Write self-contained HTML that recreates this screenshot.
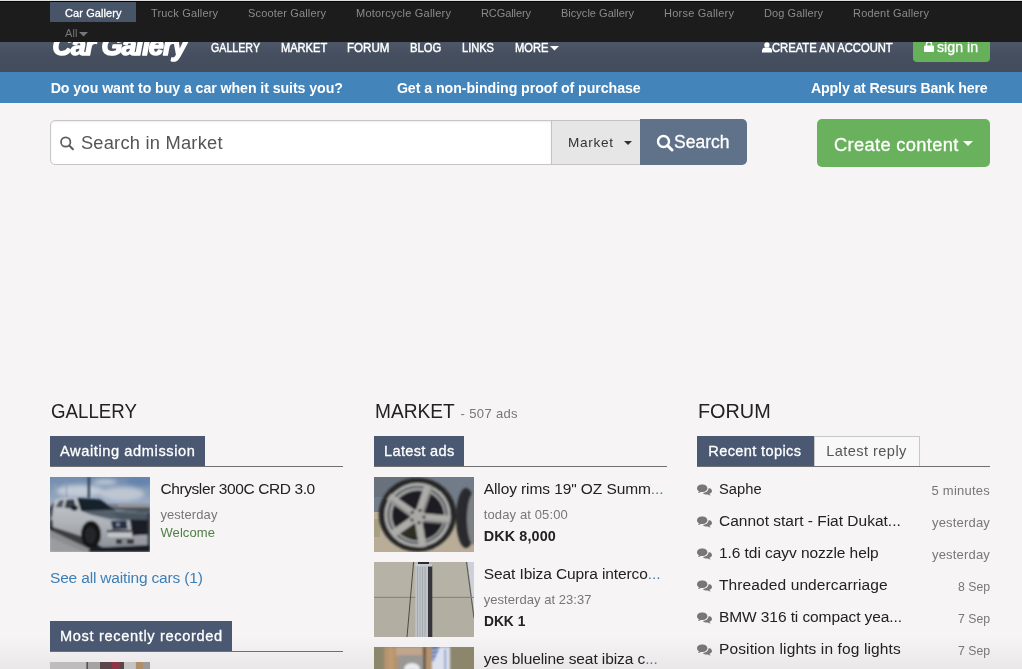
<!DOCTYPE html>
<html>
<head>
<meta charset="utf-8">
<title>Car Gallery</title>
<style>
*{box-sizing:border-box;margin:0;padding:0}
html,body{width:1022px;height:669px;overflow:hidden}
body{background:#f6f4f5;font-family:"Liberation Sans",sans-serif;color:#222;position:relative}
#wrap{position:absolute;left:0;top:0;width:1022px;height:669px;overflow:hidden;will-change:transform}
.abs{position:absolute;white-space:nowrap}
.x{line-height:1.2}
svg{display:block}
#topbar{left:0;top:0;width:1022px;height:42px;background:#1c1c1c;border-top:1px solid #dedede;box-shadow:inset 0 1px 0 #060606;z-index:5}
#gon{left:50px;top:2px;width:86px;height:20px;background:#485467;z-index:5}
#header{left:0;top:42px;width:1022px;height:30px;background:linear-gradient(#4d5767,#464f5f 40%,#444d5c)}
#signin{left:913px;top:42px;width:77px;height:20px;background:#66b05a;border-radius:0 0 4px 4px}
#bluebar{left:0;top:72px;width:1022px;height:31px;background:#4384ba}
#sinput{left:50px;top:120px;width:502px;height:45px;background:#fff;border:1px solid #c6c6c6;border-radius:5px 0 0 5px;box-shadow:inset 0 1px 2px rgba(0,0,0,.08)}
#ssel{left:551px;top:120px;width:89px;height:45px;background:#e6e6e6;border:1px solid #c3c3c3;border-right:none}
#sbtn{left:640px;top:119px;width:107px;height:46px;background:#5f7289;border-radius:0 5px 5px 0}
#create{left:817px;top:119px;width:173px;height:48px;background:#6ab15d;border-radius:5px}
.tab{top:436px;height:30px;background:#4a5971}
.tab.off{background:#f8f8f8;border:1px solid #c8c8c8;border-bottom:none}
.rule{height:1px;background:#707070;width:293px}
.thumb{width:100px;height:75px;overflow:hidden;background:#999}
.el{color:#3d7fb6}
</style>
</head>
<body>
<div id="wrap">
<div class="abs" style="left:0;top:636px;width:1022px;height:33px;background:linear-gradient(rgba(0,0,0,0),rgba(0,0,0,.05))"></div>
<div id="topbar" class="abs"></div>
<div id="gon" class="abs"></div>
<div id="header" class="abs"></div>
<svg class="abs" style="left:40px;top:42px" width="170" height="24" viewBox="40 42 170 24"><text x="52.500" y="55" font-family="Liberation Sans, sans-serif" font-size="27" font-weight="bold" font-style="italic" fill="#fff" stroke="#fff" stroke-width="1.500" stroke-linejoin="round" textLength="135" lengthAdjust="spacing">Car Gallery</text></svg>
<svg class="abs" style="left:79px;top:32px;z-index:6" width="9" height="5" viewBox="0 0 9 5"><path d="M0 0h9L4.500 4.500z" fill="#777"/></svg>
<svg class="abs" style="left:550px;top:46px" width="9" height="5" viewBox="0 0 9 5"><path d="M0 0h9L4.500 4.500z" fill="#fff"/></svg>
<svg class="abs" style="left:762px;top:42px" width="10" height="11" viewBox="0 0 10 11"><circle cx="4.900" cy="2.900" r="2.650" fill="#fff"/><path d="M0 10.400V8.300C0 6.400 1.800 5.500 3 5.500h4c1.200 0 3 .9 3 2.800V10.400z" fill="#fff"/></svg>
<div id="signin" class="abs"></div>
<svg class="abs" style="left:924px;top:41px" width="10" height="11" viewBox="0 0 10 11"><rect x="0" y="4.500" width="10" height="6.500" rx="1" fill="#fff"/><path d="M2.500 5V3.200a2.500 2.500 0 0 1 5 0V5" stroke="#fff" stroke-width="1.500" fill="none"/></svg>
<div id="bluebar" class="abs"></div>
<div id="sinput" class="abs"></div>
<svg class="abs" style="left:59px;top:135px" width="16" height="16" viewBox="59 135 16 16"><circle cx="65.700" cy="142" r="4.700" stroke="#5c5c5c" stroke-width="1.700" fill="none"/><path d="M69.200 145.500L72.900 149.200" stroke="#5c5c5c" stroke-width="2" stroke-linecap="round"/></svg>
<div id="ssel" class="abs"></div>
<svg class="abs" style="left:624px;top:141px" width="8" height="4" viewBox="0 0 8 4"><path d="M0 0h8L4 4z" fill="#333"/></svg>
<div id="sbtn" class="abs"></div>
<svg class="abs" style="left:656px;top:134px" width="18" height="18" viewBox="0 0 18 18"><circle cx="7.500" cy="7.500" r="5.500" stroke="#fff" stroke-width="2.400" fill="none"/><path d="M11.500 11.500L16 16" stroke="#fff" stroke-width="3" stroke-linecap="round"/></svg>
<div id="create" class="abs"></div>
<svg class="abs" style="left:963px;top:141px" width="10" height="5" viewBox="0 0 10 5"><path d="M0 0h10L5 5z" fill="#fff"/></svg>

<div class="abs tab" style="left:50px;width:155px"></div>
<div class="abs rule" style="left:50px;top:466px"></div>
<div class="abs thumb" id="th1" style="left:50px;top:477px"><svg width="100" height="75" viewBox="0 0 100 75"><defs><linearGradient id="sky" x1="0" y1="0" x2="0" y2="1"><stop offset="0" stop-color="#6f8bae"/><stop offset=".3" stop-color="#97a8c0"/><stop offset="1" stop-color="#b6bfcb"/></linearGradient><linearGradient id="bod" x1="0" y1="0" x2="0" y2="1"><stop offset="0" stop-color="#c2c5c9"/><stop offset=".5" stop-color="#b0b4b9"/><stop offset="1" stop-color="#8d9298"/></linearGradient><filter id="b1" x="-5%" y="-5%" width="110%" height="110%"><feGaussianBlur stdDeviation="0.8"/></filter><filter id="b2" x="-20%" y="-20%" width="140%" height="140%"><feGaussianBlur stdDeviation="2.200"/></filter></defs><rect width="100" height="75" fill="url(#sky)"/><g filter="url(#b2)"><ellipse cx="30" cy="14" rx="24" ry="6" fill="#c2cad6"/><ellipse cx="72" cy="17" rx="22" ry="7" fill="#bec6d2"/><ellipse cx="90" cy="4" rx="14" ry="5" fill="#6484ad"/><ellipse cx="15" cy="3" rx="16" ry="4" fill="#7690b2"/><ellipse cx="55" cy="5" rx="12" ry="3" fill="#bcc5d2"/></g><g filter="url(#b1)"><rect x="37.800" y="0" width="2.200" height="21" fill="#2c3a50"/><rect x="16" y="4" width="1" height="17" fill="#8a98ac"/><rect x="5" y="6" width=".8" height="16" fill="#94a0b4"/><path d="M50 27h50v10H50z" fill="#767d88"/><path d="M68 27.500h32v2.500H68z" fill="#9a9898"/><path d="M60 30.500h40v5H60z" fill="#4a525e"/><path d="M0 46L30 58 54 75H0z" fill="#8b8d91"/><path d="M0 60L34 75H0z" fill="#9a9c9e"/><path d="M0 49L30 59 44 70 40 72 0 53z" fill="#3a3c40"/><path d="M44 66L100 60V75H38z" fill="#1b1f25"/><path d="M0 28L6 22.500 12 20.800 27 20.500 31 33 58 32 100 36V68L58 70 52 70 30 58 0 49z" fill="url(#bod)"/><path d="M0 30L4 24.500 2 40 0 42z" fill="#2a2e36"/><path d="M5.500 30L9.500 23.500 14 22.800 12.200 30.500z" fill="#4a5462"/><path d="M14.500 30.800L16.500 22.800 24 22.300 26.500 32.500z" fill="#353d4a"/><ellipse cx="24.500" cy="31" rx="3.400" ry="2.800" fill="#1a1e26"/><path d="M27 21L50 22.500 63 31.500 66 33.500 31 34z" fill="#18202a"/><path d="M31 34L66 33.500 100 35.500V44.500L62 42.500 42 38z" fill="#55616d"/><path d="M60 36L100 38V43L70 41.500z" fill="#48545f"/><path d="M42 38L62 42.500 100 44.500V46L60 45z" fill="#a2aab2"/><path d="M0 40L2.500 44 3 54 0 52z" fill="#16181c"/><ellipse cx="41" cy="57.500" rx="10" ry="13.800" fill="#131519"/><ellipse cx="40.500" cy="58" rx="5.500" ry="8.500" fill="#22252b"/><path d="M61 44L76.500 43.500 77.500 52 62.500 52.500z" fill="#262e42"/><circle cx="68" cy="47.500" r="2" fill="#7e889c"/><path d="M80 42.500L100 43V57.500L82 58.500z" fill="#1b1f27"/><path d="M57 53H80.500V55.400H57z" fill="#22262c"/><path d="M58 55.400H82V60H58z" fill="#c2c4c7"/><path d="M66 62h18v5H66z" fill="#34383e"/><path d="M72 62.500h5v4h-5z" fill="#90949a"/><path d="M97.500 36h2.500v32h-2.500z" fill="#33373f"/></g></svg></div>
<div class="abs tab" style="left:50px;top:621px;width:182px"></div>
<div class="abs rule" style="left:50px;top:651px"></div>
<div class="abs thumb" id="th2" style="left:50px;top:662px"><svg width="100" height="75" viewBox="0 0 100 75"><defs><filter id="b6" x="-5%" y="-5%" width="110%" height="110%"><feGaussianBlur stdDeviation="0.7"/></filter></defs><rect width="100" height="75" fill="#bdbdbd"/><g filter="url(#b6)"><rect x="36.500" width="1.300" height="75" fill="#3c3c3c"/><rect x="38" width="12" height="75" fill="#a4a4a4"/><rect x="50" width="24" height="75" fill="#5c444a"/><rect x="62" width="8" height="75" fill="#8e3444"/><rect x="74" width="11" height="75" fill="#c4c4c4"/><rect x="86" width="7" height="75" fill="#b08e68"/><rect x="93" width="7" height="75" fill="#9a9a9a"/></g></svg></div>

<div class="abs tab" style="left:374px;width:90px"></div>
<div class="abs rule" style="left:374px;top:466px"></div>
<div class="abs thumb" id="th3" style="left:374px;top:477px"><svg width="100" height="75" viewBox="0 0 100 75"><defs><filter id="b3" x="-5%" y="-5%" width="110%" height="110%"><feGaussianBlur stdDeviation="0.9"/></filter></defs><rect width="100" height="75" fill="#727c88"/><rect width="40" height="20" fill="#68717c"/><rect y="35" width="100" height="40" fill="#b9ad98"/><rect y="42" width="6" height="18" fill="#a8a082"/><g filter="url(#b3)"><ellipse cx="92" cy="41" rx="10" ry="30" fill="#2a2b2d"/><ellipse cx="100" cy="42" rx="7" ry="26" fill="#7e8184"/><ellipse cx="43.500" cy="37.700" rx="38.800" ry="37" fill="#262627"/><ellipse cx="43.500" cy="38" rx="33" ry="32" fill="#b2b2b2"/><ellipse cx="43.500" cy="38" rx="30.300" ry="29.300" fill="#505254"/><ellipse cx="43.500" cy="38" rx="28.300" ry="27.300" fill="#a0a0a0"/><ellipse cx="44" cy="38.500" rx="26" ry="25" fill="#1e1f21"/><ellipse cx="40" cy="55" rx="12" ry="6" fill="#3a3c22" opacity=".55"/><g stroke="#adaca9" stroke-width="7.500" stroke-linecap="butt"><path d="M43.800 39.600L54.500 8"/><path d="M43.800 39.600L15 19.500"/><path d="M43.800 39.600L76.500 42.500"/><path d="M43.800 39.600L18 57.500"/><path d="M43.800 39.600L48.800 70"/></g><g stroke="#8e8e8d" stroke-width="3" stroke-linecap="butt" opacity=".7"><path d="M47.500 40L58 10"/><path d="M42.500 43L16 23"/><path d="M44 43.500L76 46"/></g><circle cx="43.800" cy="39.600" r="7.500" fill="#a9a8a6"/><circle cx="38.300" cy="35.300" r="1.500" fill="#222"/><circle cx="46" cy="33.300" r="1.500" fill="#222"/><circle cx="50" cy="40" r="1.500" fill="#222"/><circle cx="45" cy="45.800" r="1.500" fill="#222"/><circle cx="38" cy="43" r="1.500" fill="#222"/></g></svg></div>
<div class="abs thumb" id="th4" style="left:374px;top:562px"><svg width="100" height="75" viewBox="0 0 100 75"><defs><filter id="b4" x="-5%" y="-5%" width="110%" height="110%"><feGaussianBlur stdDeviation="0.6"/></filter></defs><rect width="100" height="75" fill="#b6b2a6"/><rect y="36" width="100" height="39" fill="#b2aea2"/><g filter="url(#b4)"><path d="M93.500 0H100V50z" fill="#ccd0da"/><path d="M92.500 0L100 56" stroke="#5a5a56" stroke-width="1.100"/><rect x="0" y="34.800" width="100" height="1.200" fill="#8a8678"/><path d="M39.600 0L33 75" stroke="#4c4a44" stroke-width="1"/><rect x="41.300" y="0" width="13" height="75" fill="#bfc3c8"/><g stroke="#9ea3aa" stroke-width=".8"><path d="M43.500 3V75"/><path d="M46 3V75"/><path d="M48.500 3V75"/><path d="M51 3V75"/></g><rect x="54" y="3" width="4.300" height="72" fill="#34363a"/><rect x="44" y="0" width="11" height="2" fill="#2c2e32"/><rect x="41.300" y="2" width="17" height="2.500" fill="#c8ccd0"/></g></svg></div>
<div class="abs thumb" id="th5" style="left:374px;top:647px"><svg width="100" height="75" viewBox="0 0 100 75"><defs><filter id="b5" x="-5%" y="-5%" width="110%" height="110%"><feGaussianBlur stdDeviation="0.9"/></filter></defs><rect width="100" height="75" fill="#8c866c"/><g filter="url(#b5)"><rect x="10" width="48" height="75" fill="#b3926f"/><rect x="14" width="6" height="75" fill="#bd9a72"/><rect x="22" width="26" height="9" fill="#c2a68c"/><rect x="24" y="8" width="26" height="67" fill="#9a9794"/><ellipse cx="38" cy="22" rx="8" ry="6" fill="#e8eaee"/><ellipse cx="38" cy="26" rx="5" ry="3" fill="#50545c"/><rect x="49.500" width="2" height="75" fill="#4c4032"/><rect x="58" width="18" height="75" fill="#dcdfee"/><path d="M58 0H66L60 14H58z" fill="#5674b4"/><g stroke="#e0e4f0" stroke-width="1"><path d="M58 4L66 2"/><path d="M58 8L64 6.500"/><path d="M58 12L62 11"/></g><rect x="70.500" y="2" width="1.600" height="73" fill="#7a98c8"/></g></svg></div>

<div class="abs tab" style="left:697px;width:117px"></div>
<div class="abs tab off" style="left:814px;width:106px"></div>
<div class="abs rule" style="left:697px;top:466px"></div>
<svg class="abs" style="left:697px;top:484px" width="15" height="13" viewBox="0 0 15 13"><path d="M5.200 0.500C2.300 0.500 0 2.100 0 4.200c0 1.200.8 2.300 2 3-.2.700-.6 1.300-1.200 1.800 1.100-.1 2.100-.5 2.900-1.100.5.100 1 .1 1.500.1 2.900 0 5.200-1.700 5.200-3.800S8.100.5 5.200.5z" fill="#777"/><path d="M11.400 4.600c0 2.500-2.700 4.400-6 4.500 1 .9 2.500 1.500 4.200 1.500.4 0 .8 0 1.200-.1.800.6 1.800 1 2.900 1.100-.6-.5-1-1.100-1.200-1.800 1.500-.6 2.500-1.700 2.500-2.900 0-1.300-1.100-2.400-2.700-3 .1.200.1.500.1.700z" fill="#777"/></svg>
<svg class="abs" style="left:697px;top:516px" width="15" height="13" viewBox="0 0 15 13"><path d="M5.200 0.500C2.300 0.500 0 2.100 0 4.200c0 1.200.8 2.300 2 3-.2.700-.6 1.300-1.200 1.800 1.100-.1 2.100-.5 2.900-1.100.5.100 1 .1 1.500.1 2.900 0 5.200-1.700 5.200-3.800S8.100.5 5.200.5z" fill="#777"/><path d="M11.400 4.600c0 2.500-2.700 4.400-6 4.500 1 .9 2.500 1.500 4.200 1.500.4 0 .8 0 1.200-.1.800.6 1.800 1 2.900 1.100-.6-.5-1-1.100-1.200-1.800 1.500-.6 2.500-1.700 2.500-2.900 0-1.300-1.100-2.400-2.700-3 .1.200.1.500.1.700z" fill="#777"/></svg>
<svg class="abs" style="left:697px;top:548px" width="15" height="13" viewBox="0 0 15 13"><path d="M5.200 0.500C2.300 0.500 0 2.100 0 4.200c0 1.200.8 2.300 2 3-.2.700-.6 1.300-1.200 1.800 1.100-.1 2.100-.5 2.900-1.100.5.100 1 .1 1.500.1 2.900 0 5.200-1.700 5.200-3.800S8.100.5 5.200.5z" fill="#777"/><path d="M11.400 4.600c0 2.500-2.700 4.400-6 4.500 1 .9 2.500 1.500 4.200 1.500.4 0 .8 0 1.200-.1.800.6 1.800 1 2.900 1.100-.6-.5-1-1.100-1.200-1.800 1.500-.6 2.500-1.700 2.500-2.900 0-1.300-1.100-2.400-2.700-3 .1.200.1.500.1.700z" fill="#777"/></svg>
<svg class="abs" style="left:697px;top:580px" width="15" height="13" viewBox="0 0 15 13"><path d="M5.200 0.500C2.300 0.500 0 2.100 0 4.200c0 1.200.8 2.300 2 3-.2.700-.6 1.300-1.200 1.800 1.100-.1 2.100-.5 2.900-1.100.5.100 1 .1 1.500.1 2.900 0 5.200-1.700 5.200-3.800S8.100.5 5.200.5z" fill="#777"/><path d="M11.400 4.600c0 2.500-2.700 4.400-6 4.500 1 .9 2.500 1.500 4.200 1.500.4 0 .8 0 1.200-.1.800.6 1.800 1 2.900 1.100-.6-.5-1-1.100-1.200-1.800 1.500-.6 2.500-1.700 2.500-2.900 0-1.300-1.100-2.400-2.700-3 .1.200.1.500.1.700z" fill="#777"/></svg>
<svg class="abs" style="left:697px;top:612px" width="15" height="13" viewBox="0 0 15 13"><path d="M5.200 0.500C2.300 0.500 0 2.100 0 4.200c0 1.200.8 2.300 2 3-.2.700-.6 1.300-1.200 1.800 1.100-.1 2.100-.5 2.900-1.100.5.100 1 .1 1.500.1 2.900 0 5.200-1.700 5.200-3.800S8.100.5 5.200.5z" fill="#777"/><path d="M11.400 4.600c0 2.500-2.700 4.400-6 4.500 1 .9 2.500 1.500 4.200 1.500.4 0 .8 0 1.200-.1.800.6 1.800 1 2.900 1.100-.6-.5-1-1.100-1.200-1.800 1.500-.6 2.500-1.700 2.500-2.900 0-1.300-1.100-2.400-2.700-3 .1.200.1.500.1.700z" fill="#777"/></svg>
<svg class="abs" style="left:697px;top:644px" width="15" height="13" viewBox="0 0 15 13"><path d="M5.200 0.500C2.300 0.500 0 2.100 0 4.200c0 1.200.8 2.300 2 3-.2.700-.6 1.300-1.200 1.800 1.100-.1 2.100-.5 2.900-1.100.5.100 1 .1 1.500.1 2.900 0 5.200-1.700 5.200-3.800S8.100.5 5.200.5z" fill="#777"/><path d="M11.400 4.600c0 2.500-2.700 4.400-6 4.500 1 .9 2.500 1.500 4.200 1.500.4 0 .8 0 1.200-.1.800.6 1.800 1 2.900 1.100-.6-.5-1-1.100-1.200-1.800 1.500-.6 2.500-1.700 2.500-2.900 0-1.300-1.100-2.400-2.700-3 .1.200.1.500.1.700z" fill="#777"/></svg>
<div class="abs x" id="g1" style="left:65.0px;top:6.6px;font-size:11px;letter-spacing:0.09px;color:#fff;z-index:6;-webkit-text-stroke:0.3px #fff">Car Gallery</div>
<div class="abs x" id="g2" style="left:151.0px;top:6.6px;font-size:11px;letter-spacing:0.17px;color:#8b8b8b;z-index:6">Truck Gallery</div>
<div class="abs x" id="g3" style="left:248.0px;top:6.6px;font-size:11px;letter-spacing:0.16px;color:#8b8b8b;z-index:6">Scooter Gallery</div>
<div class="abs x" id="g4" style="left:356.0px;top:6.6px;font-size:11px;letter-spacing:0.23px;color:#8b8b8b;z-index:6">Motorcycle Gallery</div>
<div class="abs x" id="g5" style="left:481.0px;top:6.6px;font-size:11px;letter-spacing:-0.09px;color:#8b8b8b;z-index:6">RCGallery</div>
<div class="abs x" id="g6" style="left:561.0px;top:6.6px;font-size:11px;letter-spacing:0.02px;color:#8b8b8b;z-index:6">Bicycle Gallery</div>
<div class="abs x" id="g7" style="left:664.0px;top:6.6px;font-size:11px;letter-spacing:0.23px;color:#8b8b8b;z-index:6">Horse Gallery</div>
<div class="abs x" id="g8" style="left:764.0px;top:6.6px;font-size:11px;letter-spacing:0.09px;color:#8b8b8b;z-index:6">Dog Gallery</div>
<div class="abs x" id="g9" style="left:853.0px;top:6.6px;font-size:11px;letter-spacing:0.20px;color:#8b8b8b;z-index:6">Rodent Gallery</div>
<div class="abs x" id="all" style="left:65.0px;top:27.2px;font-size:11px;letter-spacing:0.13px;color:#777;z-index:6">All</div>
<div class="abs x" id="n1" style="left:211.2px;top:40.7px;font-size:12.3px;color:#fff;-webkit-text-stroke:0.45px #fff;transform:scaleX(0.867);transform-origin:0 0">GALLERY</div>
<div class="abs x" id="n2" style="left:281.0px;top:40.7px;font-size:12.3px;color:#fff;-webkit-text-stroke:0.45px #fff;transform:scaleX(0.901);transform-origin:0 0">MARKET</div>
<div class="abs x" id="n3" style="left:347.3px;top:40.7px;font-size:12.3px;color:#fff;-webkit-text-stroke:0.45px #fff;transform:scaleX(0.940);transform-origin:0 0">FORUM</div>
<div class="abs x" id="n4" style="left:409.7px;top:40.7px;font-size:12.3px;color:#fff;-webkit-text-stroke:0.45px #fff;transform:scaleX(0.916);transform-origin:0 0">BLOG</div>
<div class="abs x" id="n5" style="left:461.8px;top:40.7px;font-size:12.3px;color:#fff;-webkit-text-stroke:0.45px #fff;transform:scaleX(0.900);transform-origin:0 0">LINKS</div>
<div class="abs x" id="n6" style="left:514.6px;top:40.7px;font-size:12.3px;color:#fff;-webkit-text-stroke:0.45px #fff;transform:scaleX(0.905);transform-origin:0 0">MORE</div>
<div class="abs x" id="n7" style="left:772.0px;top:40.7px;font-size:12.3px;color:#fff;-webkit-text-stroke:0.45px #fff;transform:scaleX(0.912);transform-origin:0 0">CREATE AN ACCOUNT</div>
<div class="abs x" id="si" style="left:937.2px;top:37.5px;font-size:15.5px;color:#fff;-webkit-text-stroke:0.3px #fff;transform:scaleX(0.917);transform-origin:0 0">sign in</div>
<div class="abs x" id="b1" style="left:50.7px;top:80.4px;font-size:14.2px;letter-spacing:-0.08px;color:#fff;font-weight:bold">Do you want to buy a car when it suits you?</div>
<div class="abs x" id="b2" style="left:396.9px;top:80.4px;font-size:14.2px;letter-spacing:-0.06px;color:#fff;font-weight:bold">Get a non-binding proof of purchase</div>
<div class="abs x" id="b3" style="left:811.0px;top:80.4px;font-size:14.2px;letter-spacing:-0.16px;color:#fff;font-weight:bold">Apply at Resurs Bank here</div>
<div class="abs x" id="s1" style="left:80.9px;top:131.9px;font-size:18.3px;letter-spacing:0.23px;color:#555">Search in Market</div>
<div class="abs x" id="s2" style="left:568.0px;top:135.1px;font-size:13.6px;letter-spacing:0.69px;color:#333">Market</div>
<div class="abs x" id="s3" style="left:674.0px;top:131.3px;font-size:18.3px;color:#fff;-webkit-text-stroke:0.3px #fff;transform:scaleX(0.958);transform-origin:0 0">Search</div>
<div class="abs x" id="s4" style="left:834.0px;top:133.8px;font-size:18.3px;letter-spacing:0.34px;color:#fff;-webkit-text-stroke:0.3px #fff">Create content</div>
<div class="abs x" id="h1" style="left:50.7px;top:397.7px;font-size:21px;color:#222;transform:scaleX(0.890);transform-origin:0 0">GALLERY</div>
<div class="abs x" id="h2" style="left:374.7px;top:397.7px;font-size:21px;color:#222;transform:scaleX(0.910);transform-origin:0 0">MARKET</div>
<div class="abs x" id="h2s" style="left:460.6px;top:406.2px;font-size:13px;letter-spacing:0.35px;color:#777">- 507 ads</div>
<div class="abs x" id="h3" style="left:697.7px;top:397.7px;font-size:21px;color:#222;transform:scaleX(0.944);transform-origin:0 0">FORUM</div>
<div class="abs x" id="t1" style="left:60.0px;top:443.3px;font-size:14.6px;letter-spacing:0.60px;color:#fff;-webkit-text-stroke:0.3px #fff">Awaiting admission</div>
<div class="abs x" id="t2" style="left:384.0px;top:443.3px;font-size:14.6px;letter-spacing:0.33px;color:#fff;-webkit-text-stroke:0.3px #fff">Latest ads</div>
<div class="abs x" id="t3" style="left:708.3px;top:443.3px;font-size:14.6px;letter-spacing:0.36px;color:#fff;-webkit-text-stroke:0.3px #fff">Recent topics</div>
<div class="abs x" id="t4" style="left:826.2px;top:443.3px;font-size:14.6px;letter-spacing:0.43px;color:#555">Latest reply</div>
<div class="abs x" id="t5" style="left:60.0px;top:628.3px;font-size:14.6px;letter-spacing:0.65px;color:#fff;-webkit-text-stroke:0.3px #fff">Most recently recorded</div>
<div class="abs x" id="c1" style="left:160.4px;top:480.4px;font-size:15.5px;letter-spacing:-0.40px;color:#222">Chrysler 300C CRD 3.0</div>
<div class="abs x" id="c2" style="left:160.4px;top:507.4px;font-size:13px;letter-spacing:0.08px;color:#777">yesterday</div>
<div class="abs x" id="c3" style="left:160.4px;top:525.1px;font-size:13px;letter-spacing:0.11px;color:#4f7f46">Welcome</div>
<div class="abs x" id="c4" style="left:50.0px;top:569.4px;font-size:15.5px;letter-spacing:-0.17px;color:#3d7fb6">See all waiting cars (1)</div>
<div class="abs x" id="c5" style="left:160.4px;top:666.2px;font-size:15.5px;letter-spacing:-0.42px;color:#222">Chrysler 300C SRT8</div>
<div class="abs x" id="m1" style="left:483.7px;top:480.4px;font-size:15.5px;letter-spacing:-0.09px;color:#222">Alloy rims 19" OZ Summ<span class="el">...</span></div>
<div class="abs x" id="m2" style="left:483.7px;top:507.4px;font-size:13px;letter-spacing:0.13px;color:#777">today at 05:00</div>
<div class="abs x" id="m3" style="left:483.7px;top:528.0px;font-size:14.4px;letter-spacing:0.11px;color:#222;font-weight:bold">DKK 8,000</div>
<div class="abs x" id="m4" style="left:483.7px;top:565.4px;font-size:15.5px;letter-spacing:-0.09px;color:#222">Seat Ibiza Cupra interco<span class="el">...</span></div>
<div class="abs x" id="m5" style="left:483.7px;top:592.4px;font-size:13px;letter-spacing:0.05px;color:#777">yesterday at 23:37</div>
<div class="abs x" id="m6" style="left:483.7px;top:613.0px;font-size:14.4px;color:#222;font-weight:bold;transform:scaleX(0.956);transform-origin:0 0">DKK 1</div>
<div class="abs x" id="m7" style="left:483.7px;top:650.4px;font-size:15.5px;letter-spacing:-0.09px;color:#222">yes blueline seat ibiza c<span class="el">...</span></div>
<div class="abs x" id="f0a" style="left:719.0px;top:480.4px;font-size:15.5px;color:#222;transform:scaleX(0.950);transform-origin:0 0">Saphe</div>
<div class="abs x" id="f0b" style="left:931.5px;top:482.9px;font-size:13px;letter-spacing:0.24px;color:#777">5 minutes</div>
<div class="abs x" id="f1a" style="left:719.0px;top:512.4px;font-size:15.5px;color:#222">Cannot start - Fiat Dukat...</div>
<div class="abs x" id="f1b" style="left:932.0px;top:514.9px;font-size:13px;letter-spacing:0.18px;color:#777">yesterday</div>
<div class="abs x" id="f2a" style="left:719.0px;top:544.4px;font-size:15.5px;letter-spacing:-0.06px;color:#222">1.6 tdi cayv nozzle help</div>
<div class="abs x" id="f2b" style="left:932.0px;top:546.9px;font-size:13px;letter-spacing:0.18px;color:#777">yesterday</div>
<div class="abs x" id="f3a" style="left:719.0px;top:576.4px;font-size:15.5px;letter-spacing:0.11px;color:#222">Threaded undercarriage</div>
<div class="abs x" id="f3b" style="left:957.8px;top:578.9px;font-size:13px;color:#777;transform:scaleX(0.942);transform-origin:0 0">8 Sep</div>
<div class="abs x" id="f4a" style="left:719.0px;top:608.4px;font-size:15.5px;letter-spacing:-0.09px;color:#222">BMW 316 ti compact yea...</div>
<div class="abs x" id="f4b" style="left:957.8px;top:610.9px;font-size:13px;color:#777;transform:scaleX(0.942);transform-origin:0 0">7 Sep</div>
<div class="abs x" id="f5a" style="left:719.0px;top:640.4px;font-size:15.5px;letter-spacing:0.12px;color:#222">Position lights in fog lights</div>
<div class="abs x" id="f5b" style="left:957.8px;top:642.9px;font-size:13px;color:#777;transform:scaleX(0.942);transform-origin:0 0">7 Sep</div>
</div>
</body>
</html>
